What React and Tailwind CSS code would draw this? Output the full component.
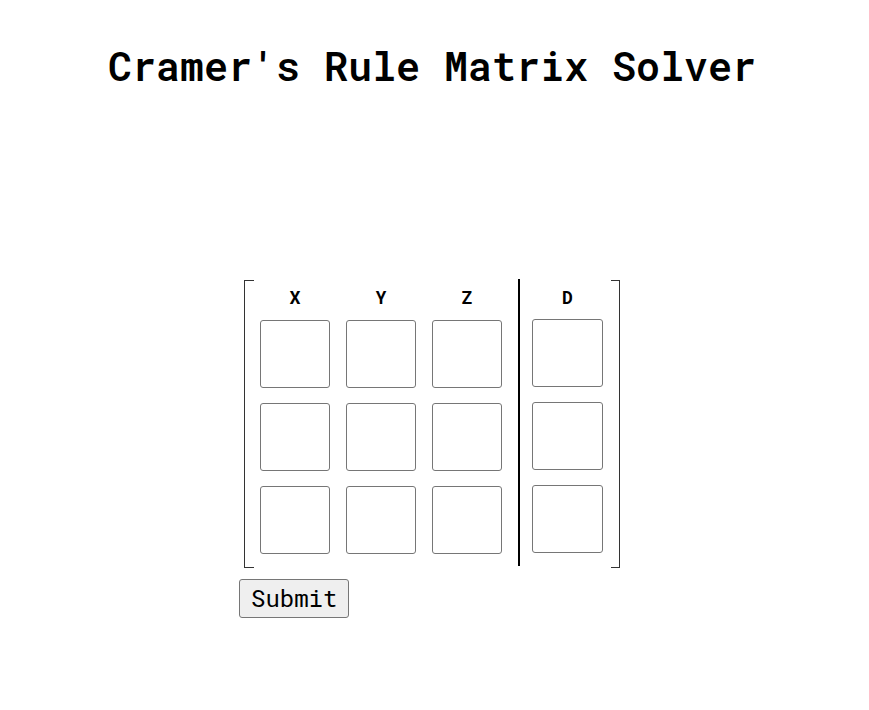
import React from 'react';

const mono = { fontFamily: '"Roboto Mono", "DejaVu Sans Mono", "Liberation Mono", monospace' };

const rows = [0, 1, 2];

const Cell = ({ w = 'w-[70px]' }) => (
  <input
    type="text"
    className={`${w} h-[68px] border border-[#767676] rounded-[3px] bg-white outline-none`}
  />
);

export default function App() {
  return (
    <div className="w-[864px] flex flex-col items-center bg-white text-black" style={mono}>
      <h1 className="mt-[40px] text-[40px] leading-[1.32] font-semibold tracking-normal">
        Cramer's Rule Matrix Solver
      </h1>

      <form className="mt-[187px] w-[386px] flex flex-col items-start" onSubmit={(e) => e.preventDefault()}>
        <div className="flex ml-[5px] h-[288px]">
          {/* left bracket */}
          <div className="w-[10px] border-l border-t border-b border-[#333]" />

          <div className="flex pl-[6px] pt-[3px]">
            {/* coefficients */}
            <div className="grid grid-cols-3 gap-x-[16px] auto-rows-min">
              {['X', 'Y', 'Z'].map((h) => (
                <div key={h} className="h-[30px] mb-[7px] flex items-center justify-center text-[18px] font-bold">
                  {h}
                </div>
              ))}
              {rows.map((r) => (
                <React.Fragment key={r}>
                  <div className="mb-[15px]"><Cell /></div>
                  <div className="mb-[15px]"><Cell /></div>
                  <div className="mb-[15px]"><Cell /></div>
                </React.Fragment>
              ))}
            </div>

            {/* divider */}
            <div className="w-[2px] bg-black ml-[16px] mr-[12px] -mt-[4px] h-[287px]" />

            {/* constants */}
            <div className="flex flex-col">
              <div className="h-[30px] mb-[7px] flex items-center justify-center text-[18px] font-bold">D</div>
              {rows.map((r) => (
                <div key={r} className="mb-[15px]"><Cell w="w-[71px]" /></div>
              ))}
            </div>
          </div>

          {/* right bracket */}
          <div className="w-[9px] ml-[8px] border-r border-t border-b border-[#333]" />
        </div>

        <button
          type="submit"
          className="mt-[11px] px-[11px] py-[3px] text-[24px] leading-[1.32] bg-[#efefef] border border-[#767676] rounded-[3px]"
        >
          Submit
        </button>
      </form>
    </div>
  );
}
